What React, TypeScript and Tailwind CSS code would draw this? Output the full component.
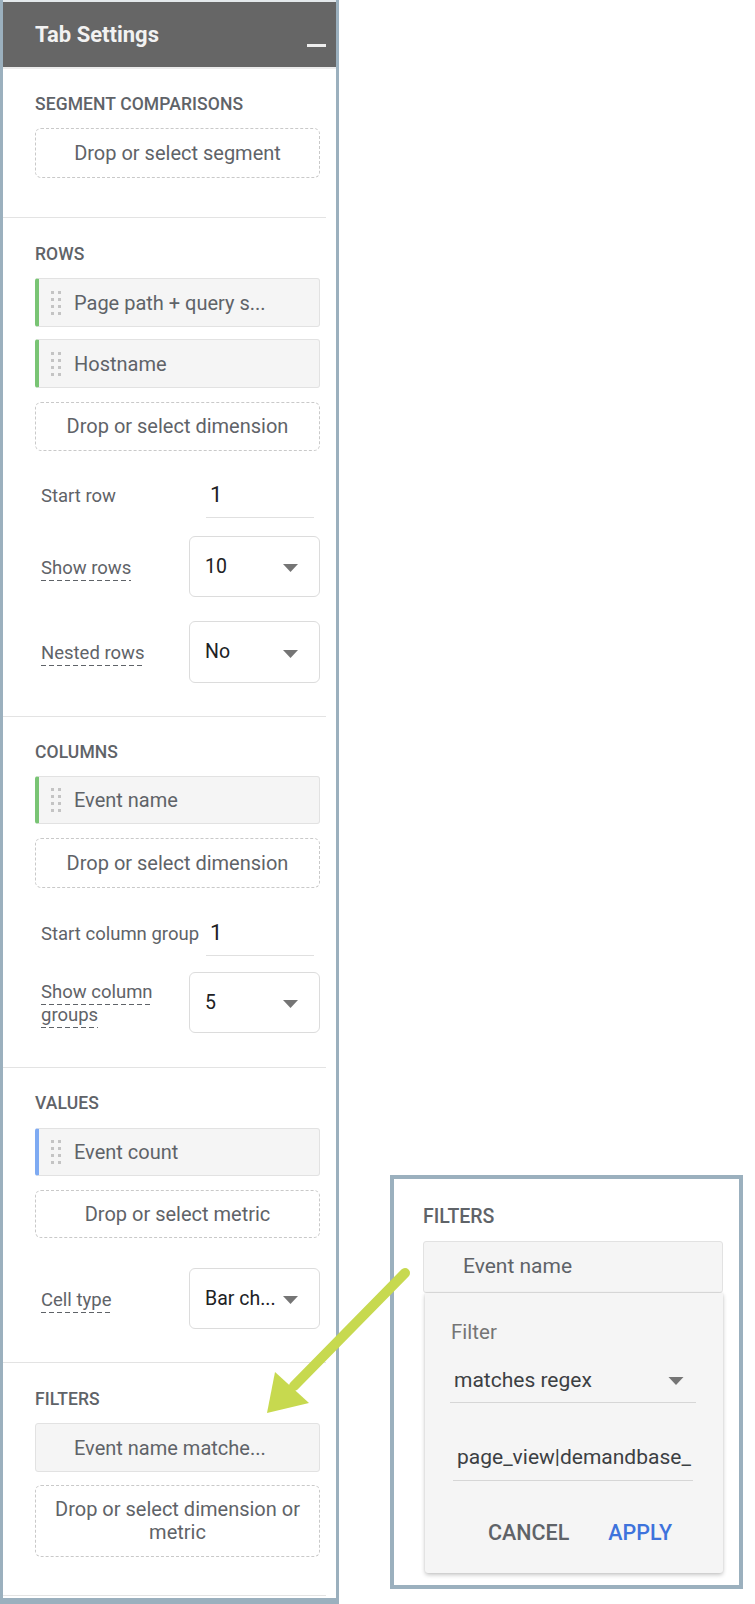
import React from 'react'

// dashed underline used on field hints
const hint =
  'pb-[2px] bg-[repeating-linear-gradient(to_right,#5f6368_0_5px,transparent_5px_8px)] bg-[length:100%_1px] bg-bottom bg-no-repeat'

function DragDots() {
  return (
    <svg width="10" height="24" viewBox="0 0 10 24" className="shrink-0">
      {[0, 7, 14, 21].map(y => (
        <g key={y} fill="#c4c4c4">
          <rect x="0" y={y} width="3" height="3" />
          <rect x="7" y={y} width="3" height="3" />
        </g>
      ))}
    </svg>
  )
}

function Caret({ className = '' }: { className?: string }) {
  return (
    <svg width="15" height="8" viewBox="0 0 15 8" className={className}>
      <path d="M0 0h15L7.5 8z" fill="#757575" />
    </svg>
  )
}

function SectionTitle({ children }: { children: React.ReactNode }) {
  return (
    <div className="h-[20px] flex items-center text-[17.5px] font-medium text-[#5f6368] tracking-[0.1px]">
      {children}
    </div>
  )
}

function Chip({ label, barClass, className = '' }: { label: string; barClass: string; className?: string }) {
  return (
    <div
      className={`rounded-[3px] border border-[#e2e2e2] bg-[#f5f5f5] flex items-center pl-[12px] ${barClass} ${className}`}
    >
      <DragDots />
      <span className="ml-[13px] text-[20px] text-[#5f6368] whitespace-nowrap">{label}</span>
    </div>
  )
}

function DropZone({ children, className = '' }: { children: React.ReactNode; className?: string }) {
  return (
    <div
      className={`rounded-[6px] border border-dashed border-[#c9c9c9] flex items-center justify-center text-center text-[20px] leading-[23px] text-[#5f6368] ${className}`}
    >
      {children}
    </div>
  )
}

function NumberField({ label, value, className = '' }: { label: string; value: string; className?: string }) {
  return (
    <div className={`flex items-center ${className}`}>
      <span className="ml-[6px] mt-[3px] text-[18.5px] text-[#5f6368]">{label}</span>
      <div className="ml-auto mr-[6px] w-[108px] h-[46px] border-b border-[#e0e0e0] flex items-center pl-[4px] text-[22px] text-[#202124]">
        {value}
      </div>
    </div>
  )
}

function SelectField({
  label,
  value,
  className = '',
  boxClass = 'h-[61px]',
}: {
  label: string
  value: string
  className?: string
  boxClass?: string
}) {
  return (
    <div className={`flex items-center ${className}`}>
      <div className="ml-[6px] mt-[3px] w-[130px] text-[18.5px] leading-[23px] text-[#5f6368]">
        <span className={hint}>{label}</span>
      </div>
      <div
        className={`ml-auto w-[131px] rounded-[6px] border border-[#dcdcdc] flex items-center pl-[15px] pr-[21px] ${boxClass}`}
      >
        <span className="text-[19.5px] text-[#202124] whitespace-nowrap">{value}</span>
        <Caret className="ml-auto mt-[3px]" />
      </div>
    </div>
  )
}

function TabSettings() {
  return (
    <div className="shrink-0 w-[339px] h-[1604px] border-l-[3px] border-r-[3px] border-b-[6px] border-[#9bb0be] flex flex-col">
      <div className="h-[69px] border-t-2 border-b-2 border-t-[#e4e9ec] border-b-[#ececec] bg-[#666666] flex items-center pl-[32px] pr-[10px]">
        <span className="text-[22px] font-bold text-[#f2f2f2]">Tab Settings</span>
        <div className="ml-auto mt-[22px] w-[19px] h-[3px] bg-[#eeeeee]" />
      </div>

      <section className="mr-[10px] pl-[32px] pr-[6px] pt-[25px] pb-[39px] border-b border-[#e3e3e3]">
        <SectionTitle>SEGMENT COMPARISONS</SectionTitle>
        <DropZone className="mt-[14px] h-[50px]">Drop or select segment</DropZone>
      </section>

      <section className="mr-[10px] pl-[32px] pr-[6px] pt-[26px] pb-[33px] border-b border-[#e3e3e3]">
        <SectionTitle>ROWS</SectionTitle>
        <Chip className="mt-[14px] h-[49px]" barClass="border-l-[4px] border-l-[#79c474]" label="Page path + query s..." />
        <Chip className="mt-[12px] h-[49px]" barClass="border-l-[4px] border-l-[#79c474]" label="Hostname" />
        <DropZone className="mt-[14px] h-[49px]">Drop or select dimension</DropZone>
        <NumberField className="mt-[21px]" label="Start row" value="1" />
        <SelectField className="mt-[18px]" label="Show rows" value="10" />
        <SelectField className="mt-[24px]" boxClass="h-[62px]" label="Nested rows" value="No" />
      </section>

      <section className="mr-[10px] pl-[32px] pr-[6px] pt-[25px] pb-[34px] border-b border-[#e3e3e3]">
        <SectionTitle>COLUMNS</SectionTitle>
        <Chip className="mt-[14px] h-[48px]" barClass="border-l-[4px] border-l-[#79c474]" label="Event name" />
        <DropZone className="mt-[14px] h-[50px]">Drop or select dimension</DropZone>
        <NumberField className="mt-[22px]" label="Start column group" value="1" />
        <SelectField className="mt-[16px]" label="Show column groups" value="5" />
      </section>

      <section className="mr-[10px] pl-[32px] pr-[6px] pt-[25px] pb-[33px] border-b border-[#e3e3e3]">
        <SectionTitle>VALUES</SectionTitle>
        <Chip className="mt-[15px] h-[48px]" barClass="border-l-[4px] border-l-[#7eaaf2]" label="Event count" />
        <DropZone className="mt-[14px] h-[48px]">Drop or select metric</DropZone>
        <SelectField className="mt-[30px]" label="Cell type" value="Bar ch..." />
      </section>

      <section className="mr-[10px] pl-[32px] pr-[6px] pt-[26px] pb-[38px] border-b border-[#e3e3e3]">
        <SectionTitle>FILTERS</SectionTitle>
        <div className="mt-[14px] h-[49px] rounded-[3px] border border-[#e2e2e2] bg-[#f5f5f5] flex items-center pl-[38px] text-[20px] text-[#5f6368] whitespace-nowrap">
          Event name matche...
        </div>
        <DropZone className="mt-[13px] h-[72px] px-[10px]">Drop or select dimension or metric</DropZone>
      </section>
    </div>
  )
}

function FilterPopover() {
  return (
    <div className="shrink-0 mt-[1175px] ml-[51px] w-[353px] h-[414px] border-4 border-[#9bb0be] pl-[29px] pr-[16px] pt-[27px]">
      <div className="h-[22px] flex items-center text-[19.5px] font-medium text-[#5f6368]">FILTERS</div>
      <div className="mt-[13px] h-[52px] rounded-[3px] border border-[#e2e2e2] bg-[#f5f5f5] flex items-center pl-[39px] text-[21px] text-[#5f6368]">
        Event name
      </div>
      <div className="ml-[2px] w-[298px] h-[280px] rounded-b-[3px] bg-[#f5f5f5] shadow-[0_2px_4px_rgba(0,0,0,0.22),0_0_2px_rgba(0,0,0,0.08)] pt-[27px]">
        <div className="ml-[26px] h-[24px] flex items-center text-[20.5px] text-[#757575]">Filter</div>
        <div className="mt-[16px] ml-[25px] w-[246px] h-[43px] border-b border-[#d6d6d6] flex items-center pl-[4px] pr-[12px]">
          <span className="text-[21px] text-[#3c4043]">matches regex</span>
          <Caret className="ml-auto w-[16px]" />
        </div>
        <div className="mt-[33px] ml-[28px] w-[240px] h-[45px] border-b border-[#d6d6d6] flex items-center pl-[4px]">
          <span className="whitespace-nowrap text-[21px] text-[#3c4043]">page_view|demandbase_</span>
        </div>
        <div className="mt-[32px] h-[40px] flex items-center pl-[63px] text-[21.5px] font-medium">
          <span className="text-[#5f6368]">CANCEL</span>
          <span className="ml-[39px] text-[#3e73dc]">APPLY</span>
        </div>
      </div>
    </div>
  )
}

// green callout linking the filter chip to its expanded editor
function Pointer() {
  return (
    <svg className="absolute inset-0 pointer-events-none" width="755" height="1604" viewBox="0 0 755 1604">
      <line x1="405" y1="1273" x2="294" y2="1386" stroke="#c7d94f" strokeWidth="10" strokeLinecap="round" />
      <polygon points="267,1413 275,1372 309,1403" fill="#c7d94f" />
    </svg>
  )
}

export default function App() {
  return (
    <div className="relative w-[755px] h-[1604px] bg-white font-['Roboto',sans-serif] flex items-start overflow-hidden">
      <TabSettings />
      <FilterPopover />
      <Pointer />
    </div>
  )
}
